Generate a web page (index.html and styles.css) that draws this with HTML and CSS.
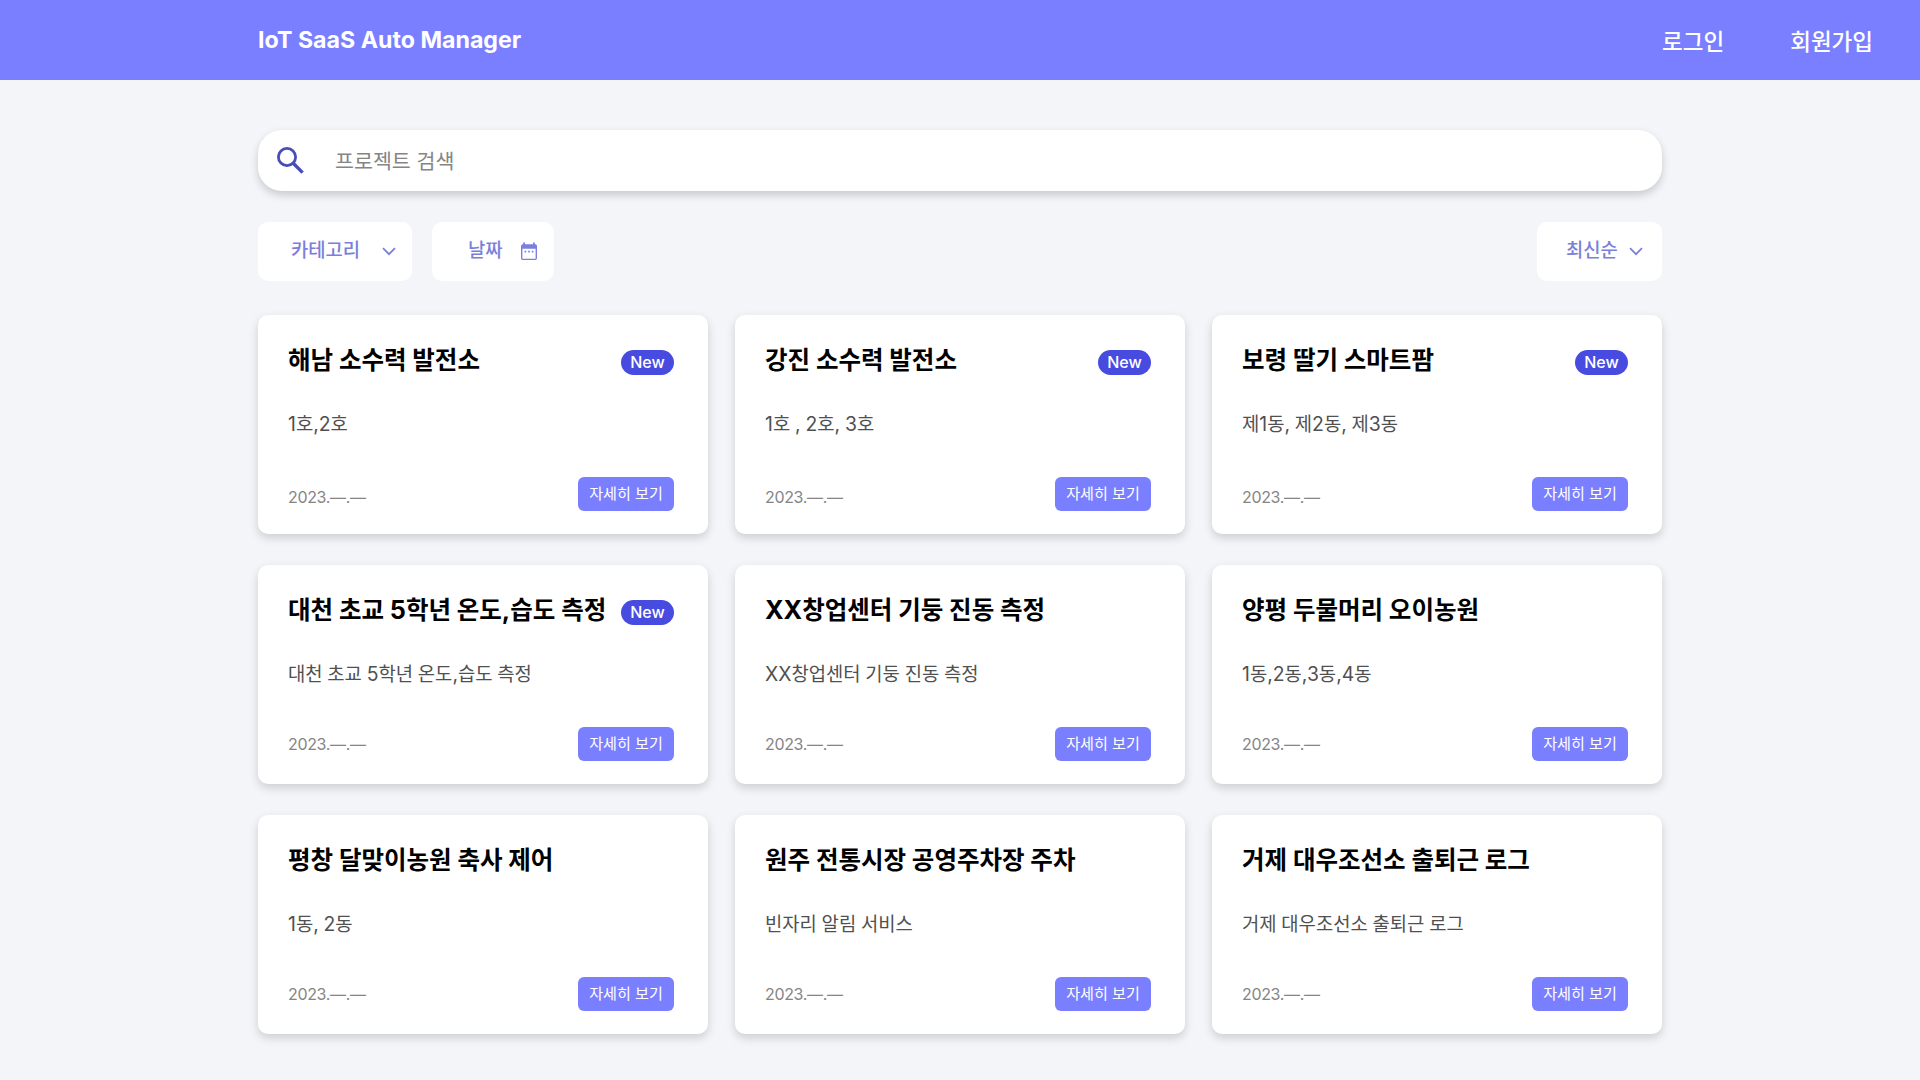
FILE: index.html
```html
<!DOCTYPE html>
<html lang="ko">
<head>
<meta charset="utf-8">
<title>IoT SaaS Auto Manager</title>
<link rel="stylesheet" href="styles.css">
</head>
<body>
<header class="header">
  <h1 class="logo">IoT SaaS Auto Manager</h1>
  <nav class="nav"><a class="nav-link">로그인</a><a class="nav-link">회원가입</a></nav>
</header>
<main class="main">
  <div class="search">
    <svg class="search-icon" viewBox="0 0 27 27"><circle cx="10" cy="10" r="8.6" fill="none" stroke="#484db8" stroke-width="2.8"/><path d="M16 16 L25.6 25.6" stroke="#484db8" stroke-width="3.4" fill="none"/></svg>
    <span class="placeholder">프로젝트 검색</span>
  </div>
  <div class="filters">
    <div class="filter category"><span>카테고리</span><svg class="chevron" viewBox="0 0 14 9"><path d="M1 1.2 L7 7.2 L13 1.2"/></svg></div>
    <div class="filter date-filter"><span>날짜</span><svg class="calendar" viewBox="0 0 18 19"><path fill-rule="evenodd" d="M3.2 0.5h1.8v1.8h8V0.5h1.8v1.8h.5a1.7 1.7 0 0 1 1.7 1.7v12.3a1.7 1.7 0 0 1-1.7 1.7H2.7a1.7 1.7 0 0 1-1.7-1.7V4a1.7 1.7 0 0 1 1.7-1.7h.5zM2.4 6.8v9.9h13.2V6.8z"/><path d="M4.6 8.8h1.6v1.6H4.6zM8.2 8.8h1.6v1.6H8.2zM11.8 8.8h1.6v1.6h-1.6z"/></svg></div>
    <div class="filter sort"><span>최신순</span><svg class="chevron" viewBox="0 0 14 9"><path d="M1 1.2 L7 7.2 L13 1.2"/></svg></div>
  </div>
  <section class="grid">
    <article class="card first-row">
      <div class="card-head"><h2 class="title">해남 소수력 발전소</h2><span class="badge">New</span></div>
      <p class="desc"><span class="latin">1</span>호<span class="latin">,2</span>호</p>
      <div class="card-foot"><time class="date">2023.—.—</time><a class="button">자세히 보기</a></div>
    </article>
    <article class="card first-row">
      <div class="card-head"><h2 class="title">강진 소수력 발전소</h2><span class="badge">New</span></div>
      <p class="desc"><span class="latin">1</span>호 <span class="latin">, 2</span>호<span class="latin">, 3</span>호</p>
      <div class="card-foot"><time class="date">2023.—.—</time><a class="button">자세히 보기</a></div>
    </article>
    <article class="card first-row">
      <div class="card-head"><h2 class="title">보령 딸기 스마트팜</h2><span class="badge">New</span></div>
      <p class="desc">제<span class="latin">1</span>동<span class="latin">,</span> 제<span class="latin">2</span>동<span class="latin">,</span> 제<span class="latin">3</span>동</p>
      <div class="card-foot"><time class="date">2023.—.—</time><a class="button">자세히 보기</a></div>
    </article>
    <article class="card">
      <div class="card-head"><h2 class="title">대천 초교 <span class="latin">5</span>학년 온도<span class="latin">,</span>습도 측정</h2><span class="badge">New</span></div>
      <p class="desc">대천 초교 <span class="latin">5</span>학년 온도<span class="latin">,</span>습도 측정</p>
      <div class="card-foot"><time class="date">2023.—.—</time><a class="button">자세히 보기</a></div>
    </article>
    <article class="card">
      <div class="card-head"><h2 class="title"><span class="latin">XX</span>창업센터 기둥 진동 측정</h2></div>
      <p class="desc"><span class="latin">XX</span>창업센터 기둥 진동 측정</p>
      <div class="card-foot"><time class="date">2023.—.—</time><a class="button">자세히 보기</a></div>
    </article>
    <article class="card">
      <div class="card-head"><h2 class="title">양평 두물머리 오이농원</h2></div>
      <p class="desc"><span class="latin">1</span>동<span class="latin">,2</span>동<span class="latin">,3</span>동<span class="latin">,4</span>동</p>
      <div class="card-foot"><time class="date">2023.—.—</time><a class="button">자세히 보기</a></div>
    </article>
    <article class="card">
      <div class="card-head"><h2 class="title">평창 달맞이농원 축사 제어</h2></div>
      <p class="desc"><span class="latin">1</span>동<span class="latin">,</span> <span class="latin">2</span>동</p>
      <div class="card-foot"><time class="date">2023.—.—</time><a class="button">자세히 보기</a></div>
    </article>
    <article class="card">
      <div class="card-head"><h2 class="title">원주 전통시장 공영주차장 주차</h2></div>
      <p class="desc">빈자리 알림 서비스</p>
      <div class="card-foot"><time class="date">2023.—.—</time><a class="button">자세히 보기</a></div>
    </article>
    <article class="card">
      <div class="card-head"><h2 class="title">거제 대우조선소 출퇴근 로그</h2></div>
      <p class="desc">거제 대우조선소 출퇴근 로그</p>
      <div class="card-foot"><time class="date">2023.—.—</time><a class="button">자세히 보기</a></div>
    </article>
  </section>
</main>
</body>
</html>
```
FILE: styles.css
```css
* { box-sizing: border-box; }
body {
  margin: 0;
  height: 1080px;
  overflow: hidden;
  background: #f3f5f9;
  font-family: Inter, "Noto Sans CJK KR", sans-serif;
  color: #000;
}
h1, h2, p { margin: 0; font-weight: 700; }
.header {
  height: 80px;
  padding: 0 47px 0 258px;
  display: flex;
  align-items: center;
  justify-content: space-between;
  background: #7a7fff;
  color: #fff;
}
.logo { font-size: 23.2px; line-height: 32px; }
.nav { display: flex; gap: 66px; padding-top: 4px; }
.nav-link { font-size: 22.5px; line-height: 32px; font-weight: 500; }
.main { width: 1404px; margin: 50px 0 0 258px; }
.search {
  height: 61px;
  padding-left: 19px;
  display: flex;
  align-items: center;
  gap: 31px;
  border-radius: 24px;
  background: #fff;
  box-shadow: 0 4px 8px rgba(0, 0, 0, 0.18);
}
.search-icon { width: 27px; height: 27px; }
.placeholder { margin-top: 2px; font-size: 20.6px; line-height: 30px; color: #858585; }
.filters { display: flex; gap: 20px; margin-top: 31px; }
.filter {
  height: 59px;
  display: flex;
  align-items: center;
  justify-content: space-between;
  border-radius: 10px;
  background: #fff;
  color: #7a7fdc;
  font-size: 18.8px;
  line-height: 28px;
  font-weight: 500;
}
.filter span { margin-top: -1px; }
.category { width: 154px; padding: 0 16px 0 33px; }
.date-filter { width: 122px; padding: 0 16px 0 36px; }
.sort { width: 125px; padding: 0 19px 0 29px; margin-left: auto; }
.chevron { width: 14px; height: 9px; fill: none; stroke: #7a7fdc; stroke-width: 1.7; }
.calendar { width: 18px; height: 19px; fill: #7a7fe2; }
.grid {
  display: grid;
  grid-template-columns: repeat(3, 450px);
  grid-auto-rows: 219px;
  gap: 31px 27px;
  margin-top: 34px;
}
.card {
  display: flex;
  flex-direction: column;
  padding: 27px 34px 23px 30px;
  border-radius: 10px;
  background: #fff;
  box-shadow: 0 4px 10px rgba(0, 0, 0, 0.16);
}
.card-head { display: flex; justify-content: space-between; height: 36px; }
.title { font-size: 24.5px; line-height: 36px; white-space: nowrap; }
.latin { font-size: 1.03em; line-height: 1; }
.badge {
  width: 53px;
  height: 25px;
  margin-top: 8px;
  border-radius: 13px;
  background: #484be0;
  color: #fff;
  font-size: 16px;
  line-height: 24px;
  font-weight: 500;
  text-align: center;
}
.desc {
  margin-top: 33px;
  font-size: 18.8px;
  line-height: 28px;
  font-weight: 400;
  word-spacing: -0.5px;
  color: #505050;
}
.card-foot { display: flex; justify-content: space-between; align-items: center; margin-top: auto; }
.date { font-size: 16px; line-height: 20px; letter-spacing: -0.35px; color: #858585; }
.first-row .date { padding-top: 6px; }
.button {
  width: 96px;
  height: 34px;
  border-radius: 6px;
  background: #7a7fff;
  color: #fff;
  font-size: 15.1px;
  line-height: 34px;
  text-align: center;
}
```
